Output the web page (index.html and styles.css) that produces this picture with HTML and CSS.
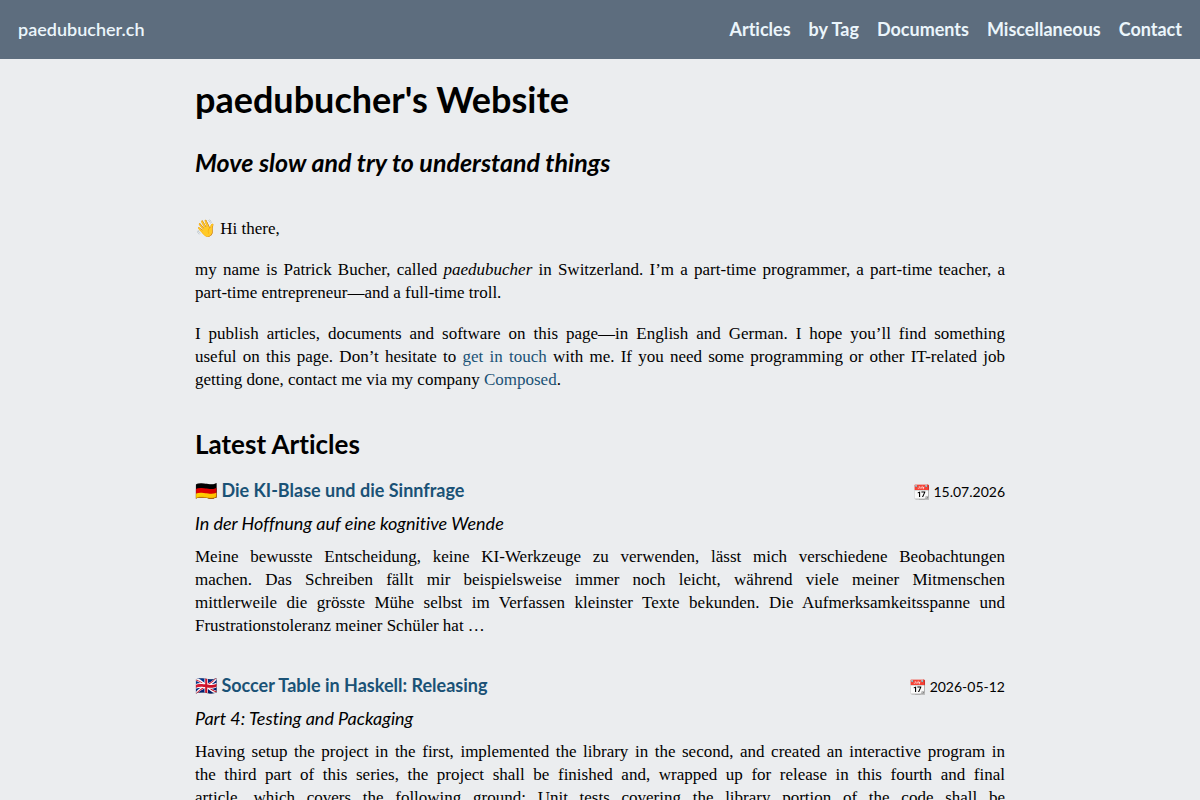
FILE: index.html
```html
<!DOCTYPE html>
<html lang="en">
<head>
<meta charset="UTF-8">
<meta name="viewport" content="width=device-width, initial-scale=1.0">
<title>paedubucher's Website</title>
<link rel="stylesheet" href="styles.css">
</head>
<body>

<header class="topbar">
  <a class="home" href="#">paedubucher.ch</a>
  <nav class="menu">
    <a href="#articles">Articles</a>
    <a href="#tags">by Tag</a>
    <a href="#documents">Documents</a>
    <a href="#misc">Miscellaneous</a>
    <a href="#contact">Contact</a>
  </nav>
</header>

<main class="content">
  <h1>paedubucher's Website</h1>
  <p class="motto">Move slow and try to understand things</p>

  <p>👋 Hi there,</p>
  <p>
    <span class="line">my name is Patrick Bucher, called <em>paedubucher</em> in Switzerland. I’m a part-time programmer, a part-time teacher, a</span>
    part-time entrepreneur—and a full-time troll.
  </p>
  <p>
    <span class="line">I publish articles, documents and software on this page—in English and German. I hope you’ll find something</span>
    <span class="line">useful on this page. Don’t hesitate to <a href="#contact">get in touch</a> with me. If you need some programming or other IT-related job</span>
    getting done, contact me via my company <a href="#composed">Composed</a>.
  </p>

  <h2 id="articles">Latest Articles</h2>

  <article class="teaser" lang="de">
    <div class="teaser-head">
      <h3>🇩🇪 <a href="#ki-blase">Die KI-Blase und die Sinnfrage</a></h3>
      <time datetime="2026-07-15">📆 15.07.2026</time>
    </div>
    <p class="subtitle">In der Hoffnung auf eine kognitive Wende</p>
    <p class="excerpt">
      <span class="line">Meine bewusste Entscheidung, keine KI-Werkzeuge zu verwenden, lässt mich verschiedene Beobachtungen</span>
      <span class="line">machen. Das Schreiben fällt mir beispielsweise immer noch leicht, während viele meiner Mitmenschen</span>
      <span class="line">mittlerweile die grösste Mühe selbst im Verfassen kleinster Texte bekunden. Die Aufmerksamkeitsspanne und</span>
      Frustrationstoleranz meiner Schüler hat …
    </p>
  </article>

  <article class="teaser">
    <div class="teaser-head">
      <h3>🇬🇧 <a href="#haskell-releasing">Soccer Table in Haskell: Releasing</a></h3>
      <time datetime="2026-05-12">📆 2026-05-12</time>
    </div>
    <p class="subtitle">Part 4: Testing and Packaging</p>
    <p class="excerpt">
      <span class="line">Having setup the project in the first, implemented the library in the second, and created an interactive program in</span>
      <span class="line">the third part of this series, the project shall be finished and, wrapped up for release in this fourth and final</span>
      <span class="line">article, which covers the following ground: Unit tests covering the library portion of the code shall be</span>
    </p>
  </article>
</main>

</body>
</html>
```
FILE: styles.css
```css
body { margin: 0; background: #ebedef; color: #000; font-family: "Liberation Serif", serif; font-size: 17px; line-height: 23px; }
a { color: #1a5276; text-decoration: none; }
p { margin: 0 0 18px; text-align: justify; }
.line { display: block; text-align-last: justify; }

.topbar { display: flex; justify-content: space-between; padding: 18px; background: #5d6d7e; font-family: Lato, sans-serif; font-size: 18px; font-weight: 700; font-variant-ligatures: none; }
.topbar a { color: #ebf5fb; }
.topbar .home { font-weight: 600; }
.menu { display: flex; gap: 18px; }

.content { max-width: 810px; margin: 0 auto; padding: 18px; }
h1, h2, h3, .motto, .subtitle, time { font-family: Lato, sans-serif; font-variant-ligatures: none; }
h1 { margin: 0 0 24px; font-size: 36px; line-height: 45px; font-weight: 700; }
.motto { margin-bottom: 39px; font-size: 25px; line-height: 32px; font-weight: 700; font-style: italic; }
h2 { margin: 37px 0 19px; font-size: 26px; line-height: 32px; font-weight: 700; }

.teaser { margin-bottom: 37px; }
.teaser-head { display: flex; justify-content: space-between; align-items: baseline; }
h3 { margin: 0; font-size: 18px; font-weight: 700; }
time { font-size: 14px; }
.subtitle { margin: 9px 0 10px; font-size: 18px; font-style: italic; }
.excerpt { margin: 0; }
```
